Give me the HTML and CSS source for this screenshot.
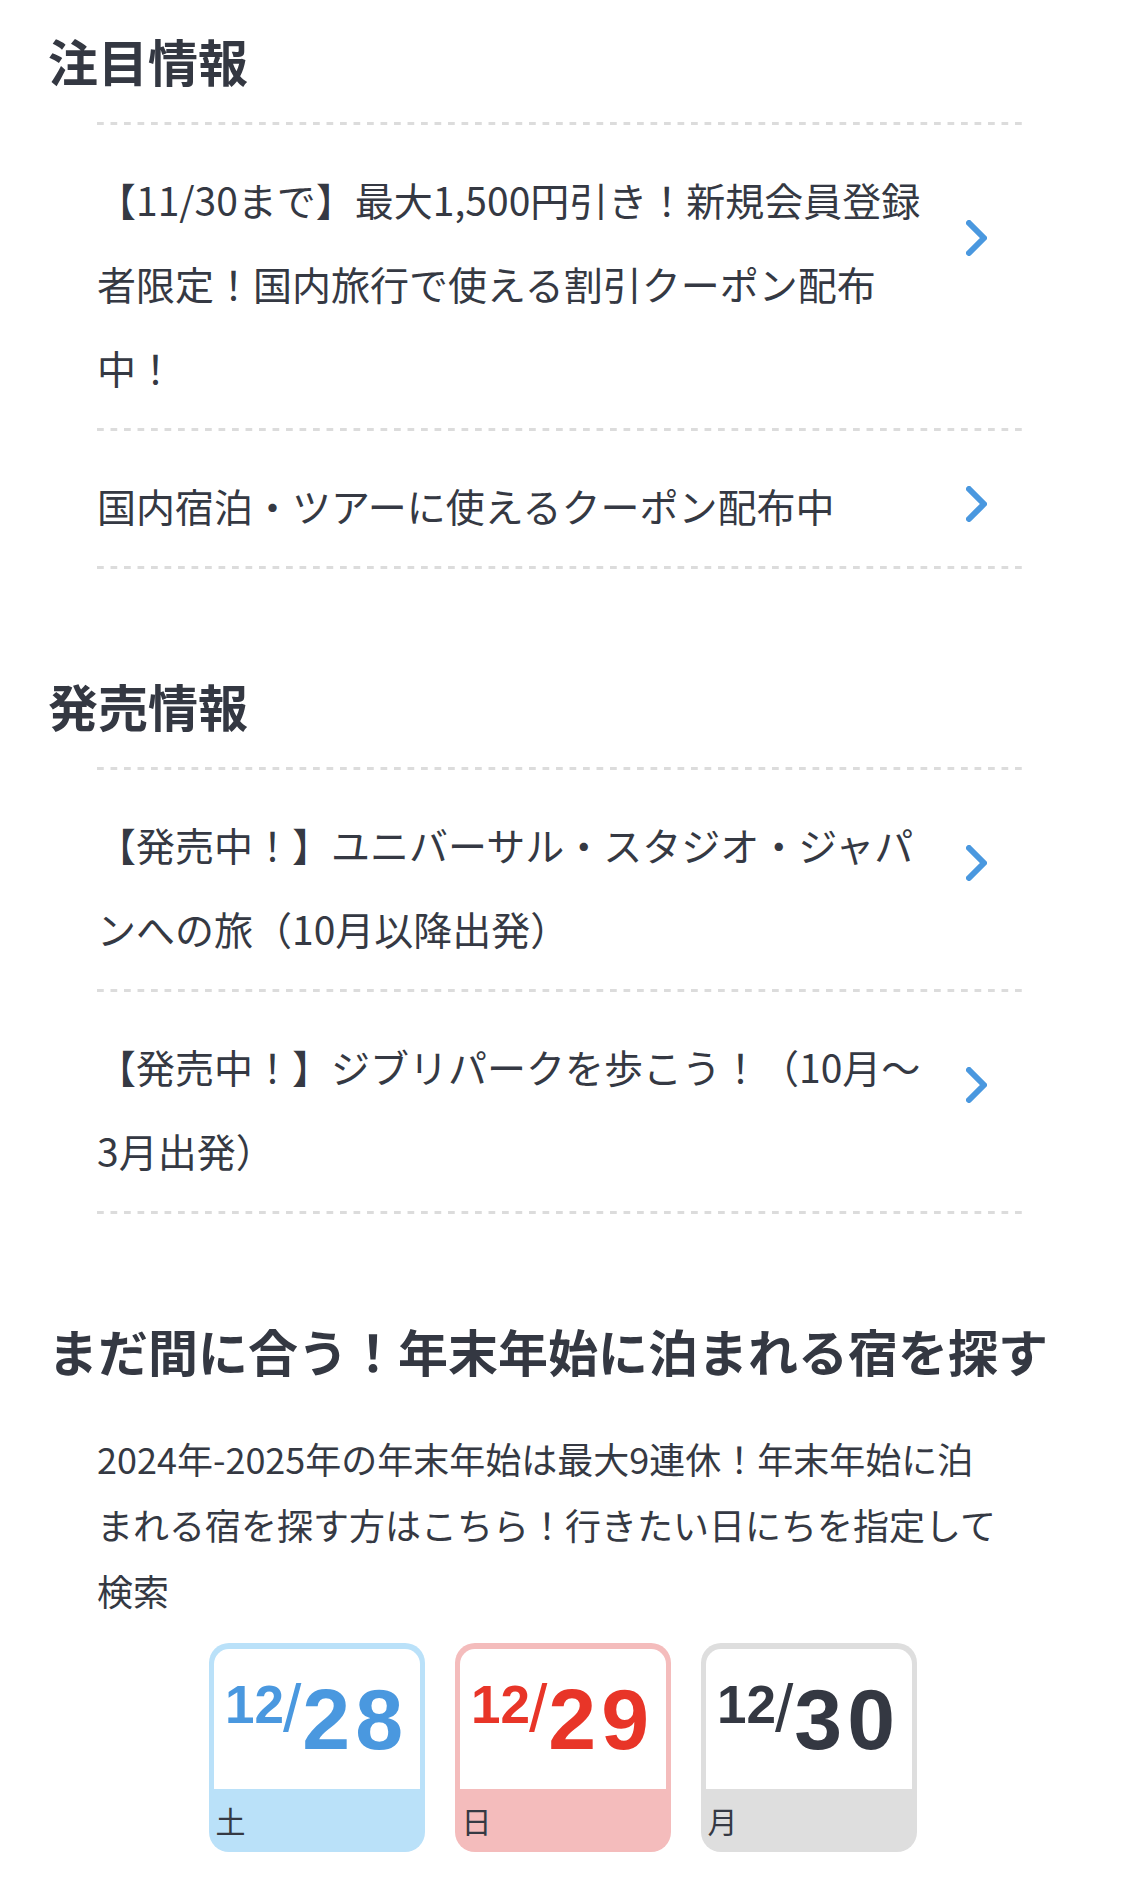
FILE: index.html
```html
<!DOCTYPE html>
<html lang="ja">
<head>
    <meta charset="UTF-8">
    <title>注目情報・発売情報</title>
    <link rel="stylesheet" href="styles.css">
</head>
<body>

    <!-- 注目情報 -->
    <section class="block">
        <h2 class="block-title">注目情報</h2>
        <ul class="link-list">
            <li class="link-item">
                <a href="#">【11/30まで】最大1,500円引き！新規会員登録者限定！国内旅行で使える割引クーポン配布中！</a>
                <svg class="chevron" viewBox="0 0 21 36" width="21" height="36"><path d="M3 3 L18 18 L3 33"/></svg>
            </li>
            <li class="link-item">
                <a href="#">国内宿泊・ツアーに使えるクーポン配布中</a>
                <svg class="chevron" viewBox="0 0 21 36" width="21" height="36"><path d="M3 3 L18 18 L3 33"/></svg>
            </li>
        </ul>
    </section>

    <!-- 発売情報 -->
    <section class="block">
        <h2 class="block-title">発売情報</h2>
        <ul class="link-list">
            <li class="link-item">
                <a href="#">【発売中！】ユニバーサル・スタジオ・ジャパンへの旅（10月以降出発）</a>
                <svg class="chevron" viewBox="0 0 21 36" width="21" height="36"><path d="M3 3 L18 18 L3 33"/></svg>
            </li>
            <li class="link-item">
                <a href="#">【発売中！】ジブリパークを歩こう！（10月〜3月出発）</a>
                <svg class="chevron" viewBox="0 0 21 36" width="21" height="36"><path d="M3 3 L18 18 L3 33"/></svg>
            </li>
        </ul>
    </section>

    <!-- 年末年始 -->
    <section class="block">
        <h2 class="block-title">まだ間に合う！年末年始に泊まれる宿を探す</h2>
        <p class="lead">2024年-2025年の年末年始は最大9連休！年末年始に泊まれる宿を探す方はこちら！行きたい日にちを指定して検索</p>

        <div class="days">
            <a href="#" class="day-card sat">
                <div class="date"><span class="date-num"><span class="month">12</span><span class="slash">/</span><span class="dd">28</span></span></div>
                <div class="weekday">土</div>
            </a>
            <a href="#" class="day-card sun">
                <div class="date"><span class="date-num"><span class="month">12</span><span class="slash">/</span><span class="dd">29</span></span></div>
                <div class="weekday">日</div>
            </a>
            <a href="#" class="day-card mon">
                <div class="date"><span class="date-num"><span class="month">12</span><span class="slash">/</span><span class="dd">30</span></span></div>
                <div class="weekday">月</div>
            </a>
        </div>
    </section>

</body>
</html>
```

FILE: styles.css
```css
* {
    box-sizing: border-box;
}

body {
    margin: 0;
    padding: 30px 48px 0;
    font-family: "Noto Sans CJK JP", sans-serif;
    color: #353943;
    background-color: #fff;
}

/* Section */
.block + .block {
    margin-top: 106px;
}

.block-title {
    margin: 0 0 32px;
    font-size: 50px;
    line-height: 60px;
    font-weight: 700;
    color: #343842;
}

/* Link list with dashed rules */
.link-list {
    list-style: none;
    margin: 0 50px 0 49px;
    padding: 0 0 3px;
    background-image: linear-gradient(to right, #dcdcdc 7px, transparent 7px);
    background-size: 13.5px 3px;
    background-repeat: repeat-x;
    background-position: left bottom;
}

.link-item {
    position: relative;
    padding: 35px 92px 19px 0;
    font-size: 39px;
    line-height: 84px;
    background-image: linear-gradient(to right, #dcdcdc 7px, transparent 7px);
    background-size: 13.5px 3px;
    background-repeat: repeat-x;
    background-position: left top;
}

.link-item a {
    display: block;
    color: inherit;
    text-decoration: none;
}

.chevron {
    position: absolute;
    right: 40px;
    top: calc(23.5% + 44px);
    transform: translateY(-50%);
    fill: none;
    stroke: #4a98df;
    stroke-width: 6;
    stroke-linecap: round;
    stroke-linejoin: round;
}

/* Lead text */
.lead {
    margin: 45px 0 0 49px;
    width: 906px;
    font-size: 36px;
    line-height: 66px;
}

/* Day cards */
.days {
    display: flex;
    justify-content: center;
    gap: 30px;
    margin-top: 20px;
}

.day-card {
    display: flex;
    flex-direction: column;
    width: 216px;
    height: 209px;
    padding: 6px 5px 0;
    border-radius: 20px;
    text-decoration: none;
}

.date {
    height: 140px;
    display: flex;
    align-items: center;
    justify-content: center;
    background-color: #fff;
    border-radius: 15px 15px 0 0;
}

.date-num {
    display: flex;
    align-items: flex-start;
    font-family: "Liberation Sans", Arial, sans-serif;
    font-weight: 700;
}

.month {
    margin-top: 2px;
    font-size: 53px;
    line-height: 1;
}

.slash {
    margin: -1px 1px 0 -1px;
    font-size: 66px;
    font-weight: 400;
    line-height: 1;
}

.dd {
    font-size: 86px;
    line-height: 1;
    letter-spacing: 5px;
}

.weekday {
    flex: 1;
    padding-left: 2px;
    font-size: 30px;
    line-height: 63px;
    color: #353943;
}

.sat {
    background-color: #bae1f9;
    color: #4a98df;
}

.sun {
    background-color: #f4bcbc;
    color: #e83528;
}

.mon {
    background-color: #dedede;
    color: #343842;
}
```
